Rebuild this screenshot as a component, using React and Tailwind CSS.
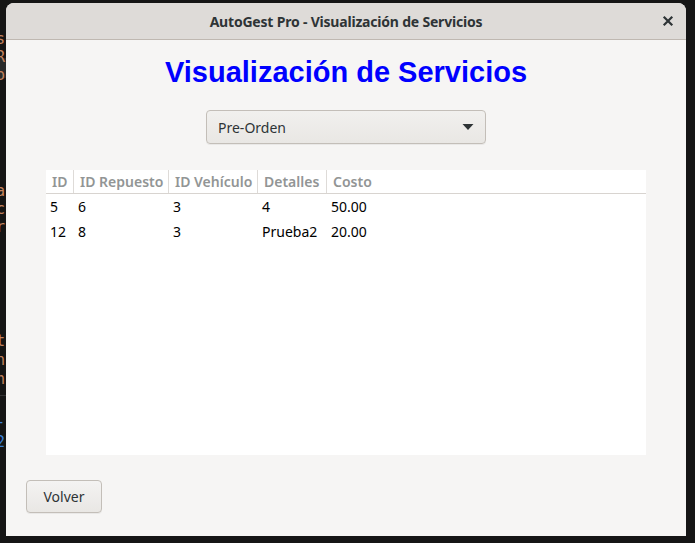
import React from "react";

const leftLines = [
  { y: 30, t: "s", c: "text-[#c2825e]" },
  { y: 48, t: "R", c: "text-[#c2825e]" },
  { y: 66, t: "o", c: "text-[#c2825e]", band: true },
  { y: 182, t: "a", c: "text-[#c2825e]" },
  { y: 200, t: "c", c: "text-[#c2825e]" },
  { y: 218, t: "r", c: "text-[#c2825e]" },
  { y: 332, t: "t", c: "text-[#c2825e]" },
  { y: 351, t: "n", c: "text-[#c2825e]" },
  { y: 370, t: "h", c: "text-[#c2825e]" },
  { y: 413, t: "-", c: "text-[#3b7fd4]" },
  { y: 433, t: "2", c: "text-[#3b7fd4]" },
];

const cols = [
  { h: "ID", w: "w-[28px]" },
  { h: "ID Repuesto", w: "w-[95px]" },
  { h: "ID Vehículo", w: "w-[89px]" },
  { h: "Detalles", w: "w-[69px]" },
  { h: "Costo", w: "flex-1" },
];

const rows = [
  ["5", "6", "3", "4", "50.00"],
  ["12", "8", "3", "Prueba2", "20.00"],
];

export default function App() {
  return (
    <div className="relative w-[695px] h-[543px] bg-[#151515] overflow-hidden font-['Noto_Sans',sans-serif]">
      {/* terminal behind */}
      <div className="absolute left-0 top-[58px] w-[8px] h-[20px] bg-[#2a2a2a]" />
      <div className="absolute left-0 top-[395px] w-[8px] h-px bg-[#333]" />
      {leftLines.map((l, i) => (
        <div
          key={i}
          className={`absolute left-[-4px] font-['DejaVu_Sans_Mono',monospace] text-[15px] leading-[18px] ${l.c}`}
          style={{ top: l.y }}
        >
          {l.t}
        </div>
      ))}

      {/* window */}
      <div className="absolute left-[6px] top-[3px] w-[680px] h-[533px] flex flex-col rounded-t-[8px] overflow-hidden bg-[#f6f5f4]">
        <div className="h-[37px] shrink-0 bg-[#dedbd8] border-b border-[#bfb8b1] flex items-center justify-center relative">
          <span className="text-[14px] font-bold text-[#2e3436] tracking-[-0.2px]">
            AutoGest Pro - Visualización de Servicios
          </span>
          <span className="absolute right-[10px] top-[10px] text-[#2e3436]">
            <svg width="16" height="16" viewBox="0 0 16 16">
              <path d="M4.5 4.5 L11.5 11.5 M11.5 4.5 L4.5 11.5" stroke="#2e3436" strokeWidth="2.2" strokeLinecap="square" />
            </svg>
          </span>
        </div>

        <div className="flex-1 flex flex-col">
          <h1 className="mt-[16px] text-center font-['Liberation_Sans',Arial,sans-serif] font-bold text-[29px] leading-[33px] text-[#0000ff]">
            Visualización de Servicios
          </h1>

          <div className="mt-[21px] mx-auto w-[280px] h-[34px] rounded-[4px] border border-[#c3beb8] bg-gradient-to-b from-[#f1f0ee] to-[#e9e7e4] flex items-center justify-between pl-[11px] pr-[11px] shadow-[0_1px_0_rgba(0,0,0,0.05)]">
            <span className="text-[14px] text-[#2e3436]">Pre-Orden</span>
            <svg width="12" height="8" viewBox="0 0 12 8">
              <path d="M0.5 1 L11.5 1 L6 7 Z" fill="#2e3436" />
            </svg>
          </div>

          <div className="mt-[26px] mx-[40px] h-[285px] bg-white flex flex-col">
            <div className="h-[24px] flex border-b border-[#d8d4d0]">
              {cols.map((c, i) => (
                <div
                  key={i}
                  className={`${c.w} h-full flex items-center pl-[6px] text-[14px] font-semibold text-[#929595] ${i < cols.length - 1 ? "border-r border-[#dedbd8]" : ""}`}
                >
                  {c.h}
                </div>
              ))}
            </div>
            {rows.map((r, ri) => (
              <div key={ri} className="h-[25px] flex">
                {cols.map((c, i) => (
                  <div key={i} className={`${c.w} ${i < cols.length - 1 ? "pr-px" : ""} flex items-center pl-[4px] text-[14px] text-[#000]`}>
                    {r[i]}
                  </div>
                ))}
              </div>
            ))}
          </div>

          <div className="mt-[25px] ml-[20px]">
            <button className="w-[76px] h-[33px] rounded-[4px] border border-[#c3beb8] bg-gradient-to-b from-[#f4f3f2] to-[#e9e7e4] text-[14px] text-[#2e3436] shadow-[0_1px_0_rgba(0,0,0,0.05)]">
              Volver
            </button>
          </div>
        </div>
      </div>
    </div>
  );
}
